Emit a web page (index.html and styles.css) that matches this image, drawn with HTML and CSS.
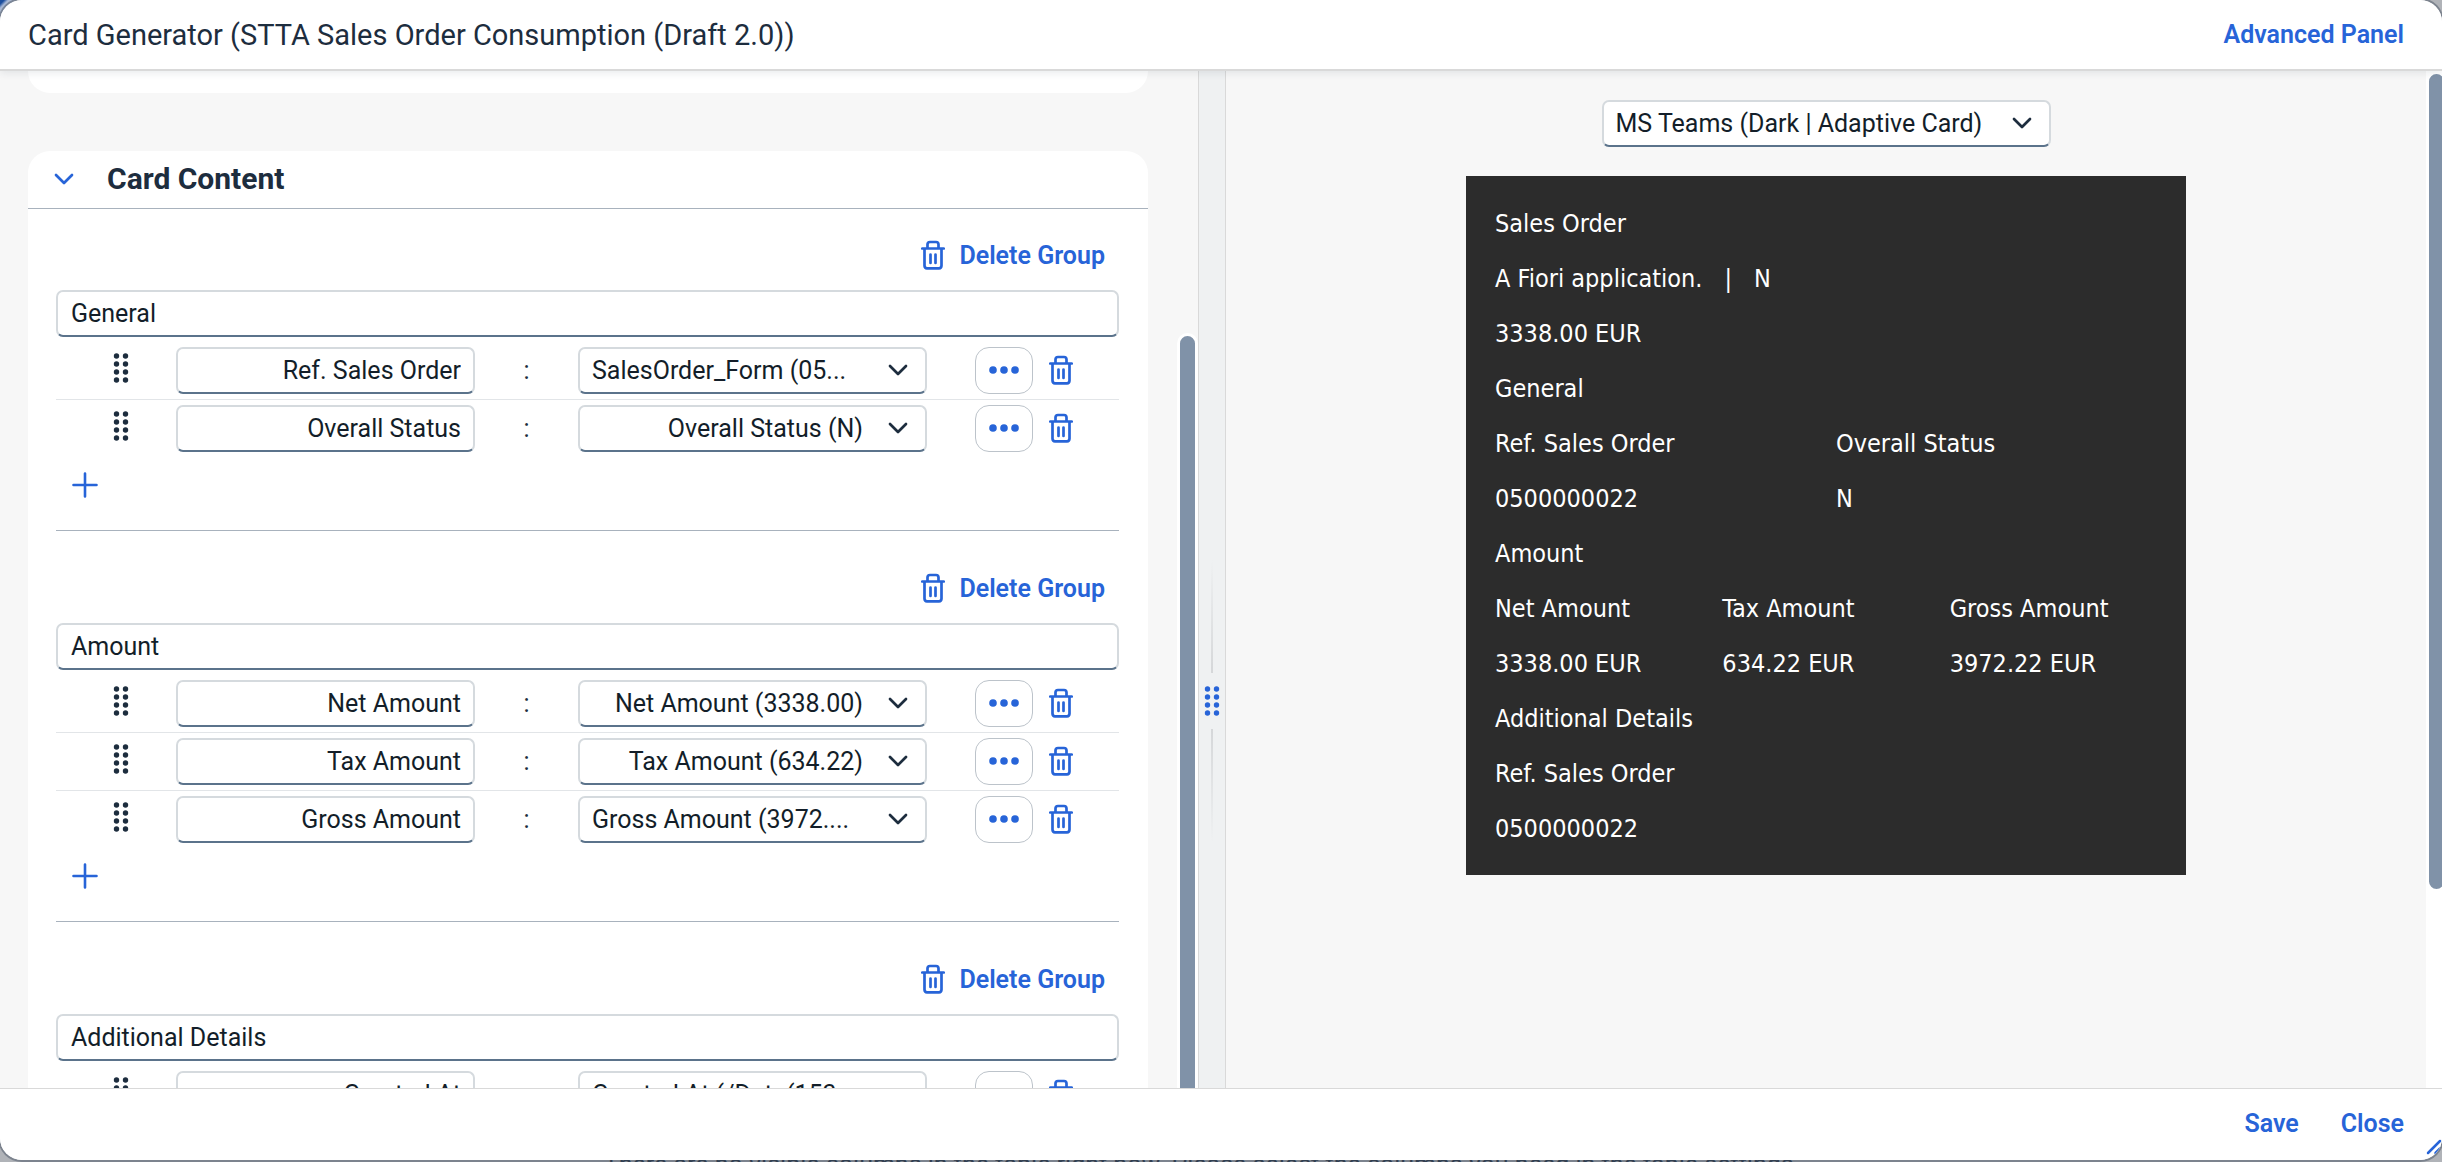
FILE: index.html
```html
<!DOCTYPE html>
<html lang="en">
<head>
<meta charset="utf-8">
<title>Card Generator</title>
<link rel="stylesheet" href="styles.css">
</head>
<body>
<svg class="sprite" aria-hidden="true">
  <symbol id="trash" viewBox="0 0 24 30">
    <path d="M1.300 8.500H22.700M6.500 8V4.500Q6.500 2 9 2H15Q17.500 2 17.500 4.500V8M3.500 9V25.500Q3.500 28.300 6 28.300H18Q20.500 28.300 20.500 25.500V9M9.500 14.500V23M14.500 14.500V23" fill="none" stroke="currentColor" stroke-width="2.700" stroke-linecap="round"/>
  </symbol>
  <symbol id="chevron" viewBox="0 0 20 12">
    <path d="M2 2L10 10L18 2" fill="none" stroke="currentColor" stroke-width="2.700" stroke-linecap="round" stroke-linejoin="round"/>
  </symbol>
  <symbol id="plus" viewBox="0 0 26 26">
    <path d="M13 1.500V24.500M1.500 13H24.500" fill="none" stroke="currentColor" stroke-width="2.600" stroke-linecap="round"/>
  </symbol>
  <symbol id="dots" viewBox="0 0 30 8">
    <circle cx="4" cy="4" r="3.800"/><circle cx="15" cy="4" r="3.800"/><circle cx="26" cy="4" r="3.800"/>
  </symbol>
  <symbol id="grip" viewBox="0 0 16 30">
    <circle cx="3.500" cy="3" r="2.700"/><circle cx="12.500" cy="3" r="2.700"/>
    <circle cx="3.500" cy="11" r="2.700"/><circle cx="12.500" cy="11" r="2.700"/>
    <circle cx="3.500" cy="19" r="2.700"/><circle cx="12.500" cy="19" r="2.700"/>
    <circle cx="3.500" cy="27" r="2.700"/><circle cx="12.500" cy="27" r="2.700"/>
  </symbol>
</svg>
<p class="backdrop-text">There are no visible columns in the table right now. Please select the columns you need in the table settings.</p>
<div class="dialog" role="dialog" aria-labelledby="dialog-title">
  <header class="dialog-header">
    <h1 id="dialog-title">Card Generator (STTA Sales Order Consumption (Draft 2.0))</h1>
    <button class="text-button" type="button">Advanced Panel</button>
  </header>
  <main class="workspace">
    <section class="pane pane-editor" aria-label="Card editor">
      <div class="editor-content">
        <div class="panel panel-previous"></div>
        <div class="panel">
          <div class="panel-header">
            <button class="icon-button expander" type="button" aria-label="Collapse"><svg class="chevron"><use href="#chevron"/></svg></button>
            <h2>Card Content</h2>
          </div>
          <div class="panel-body">
            <section class="group">
              <button class="text-button delete-group" type="button"><svg class="trash"><use href="#trash"/></svg>Delete Group</button>
              <input class="field" type="text" aria-label="Group name" value="General">
              <ul class="items">
                <li class="item">
                  <svg class="grip"><use href="#grip"/></svg>
                  <input class="field item-label" type="text" aria-label="Label" value="Ref. Sales Order">
                  <span class="colon">:</span>
                  <span class="picker picker-long"><select class="field" aria-label="Value"><option>SalesOrder_Form (05...</option></select><svg class="chevron"><use href="#chevron"/></svg></span>
                  <button class="more-button" type="button" aria-label="More"><svg class="dots"><use href="#dots"/></svg></button>
                  <button class="icon-button" type="button" aria-label="Delete"><svg class="trash"><use href="#trash"/></svg></button>
                </li>
                <li class="item">
                  <svg class="grip"><use href="#grip"/></svg>
                  <input class="field item-label" type="text" aria-label="Label" value="Overall Status">
                  <span class="colon">:</span>
                  <span class="picker"><select class="field" aria-label="Value"><option>Overall Status (N)</option></select><svg class="chevron"><use href="#chevron"/></svg></span>
                  <button class="more-button" type="button" aria-label="More"><svg class="dots"><use href="#dots"/></svg></button>
                  <button class="icon-button" type="button" aria-label="Delete"><svg class="trash"><use href="#trash"/></svg></button>
                </li>
              </ul>
              <button class="icon-button add-button" type="button" aria-label="Add"><svg class="plus"><use href="#plus"/></svg></button>
            </section>
            <section class="group">
              <button class="text-button delete-group" type="button"><svg class="trash"><use href="#trash"/></svg>Delete Group</button>
              <input class="field" type="text" aria-label="Group name" value="Amount">
              <ul class="items">
                <li class="item">
                  <svg class="grip"><use href="#grip"/></svg>
                  <input class="field item-label" type="text" aria-label="Label" value="Net Amount">
                  <span class="colon">:</span>
                  <span class="picker"><select class="field" aria-label="Value"><option>Net Amount (3338.00)</option></select><svg class="chevron"><use href="#chevron"/></svg></span>
                  <button class="more-button" type="button" aria-label="More"><svg class="dots"><use href="#dots"/></svg></button>
                  <button class="icon-button" type="button" aria-label="Delete"><svg class="trash"><use href="#trash"/></svg></button>
                </li>
                <li class="item">
                  <svg class="grip"><use href="#grip"/></svg>
                  <input class="field item-label" type="text" aria-label="Label" value="Tax Amount">
                  <span class="colon">:</span>
                  <span class="picker"><select class="field" aria-label="Value"><option>Tax Amount (634.22)</option></select><svg class="chevron"><use href="#chevron"/></svg></span>
                  <button class="more-button" type="button" aria-label="More"><svg class="dots"><use href="#dots"/></svg></button>
                  <button class="icon-button" type="button" aria-label="Delete"><svg class="trash"><use href="#trash"/></svg></button>
                </li>
                <li class="item">
                  <svg class="grip"><use href="#grip"/></svg>
                  <input class="field item-label" type="text" aria-label="Label" value="Gross Amount">
                  <span class="colon">:</span>
                  <span class="picker picker-long"><select class="field" aria-label="Value"><option>Gross Amount (3972....</option></select><svg class="chevron"><use href="#chevron"/></svg></span>
                  <button class="more-button" type="button" aria-label="More"><svg class="dots"><use href="#dots"/></svg></button>
                  <button class="icon-button" type="button" aria-label="Delete"><svg class="trash"><use href="#trash"/></svg></button>
                </li>
              </ul>
              <button class="icon-button add-button" type="button" aria-label="Add"><svg class="plus"><use href="#plus"/></svg></button>
            </section>
            <section class="group">
              <button class="text-button delete-group" type="button"><svg class="trash"><use href="#trash"/></svg>Delete Group</button>
              <input class="field" type="text" aria-label="Group name" value="Additional Details">
              <ul class="items">
                <li class="item">
                  <svg class="grip"><use href="#grip"/></svg>
                  <input class="field item-label" type="text" aria-label="Label" value="Created At">
                  <span class="colon">:</span>
                  <span class="picker picker-long"><select class="field" aria-label="Value"><option>Created At (/Date(153...</option></select><svg class="chevron"><use href="#chevron"/></svg></span>
                  <button class="more-button" type="button" aria-label="More"><svg class="dots"><use href="#dots"/></svg></button>
                  <button class="icon-button" type="button" aria-label="Delete"><svg class="trash"><use href="#trash"/></svg></button>
                </li>
              </ul>
            </section>
          </div>
        </div>
      </div>
      <div class="scroll-track scroll-editor"><div class="scroll-thumb"></div></div>
    </section>
    <div class="splitter" role="separator" aria-orientation="vertical">
      <span class="splitter-line splitter-line-top"></span>
      <svg class="grip"><use href="#grip"/></svg>
      <span class="splitter-line splitter-line-bottom"></span>
    </div>
    <section class="pane pane-preview" aria-label="Preview">
      <div class="preview-content">
        <span class="picker host-picker"><select class="field" aria-label="Preview host"><option>MS Teams (Dark | Adaptive Card)</option></select><svg class="chevron"><use href="#chevron"/></svg></span>
        <article class="card">
          <p>Sales Order</p>
          <p class="card-subtitle"><span>A Fiori application.</span><span>|</span><span>N</span></p>
          <p>3338.00 EUR</p>
          <p>General</p>
          <div class="columns columns-two"><span>Ref. Sales Order</span><span>Overall Status</span></div>
          <div class="columns columns-two"><span>0500000022</span><span>N</span></div>
          <p>Amount</p>
          <div class="columns columns-three"><span>Net Amount</span><span>Tax Amount</span><span>Gross Amount</span></div>
          <div class="columns columns-three"><span>3338.00 EUR</span><span>634.22 EUR</span><span>3972.22 EUR</span></div>
          <p>Additional Details</p>
          <p>Ref. Sales Order</p>
          <p>0500000022</p>
        </article>
      </div>
      <div class="scroll-track scroll-preview"><div class="scroll-thumb"></div></div>
    </section>
  </main>
  <footer class="dialog-footer">
    <button class="text-button" type="button">Save</button>
    <button class="text-button" type="button">Close</button>
    <svg class="resize-handle" viewBox="0 0 16 16" aria-hidden="true"><path d="M2 14L14 2M9.500 14L14 9.500" fill="none" stroke="currentColor" stroke-width="2.500" stroke-linecap="round"/></svg>
  </footer>
</div>
</body>
</html>
```
FILE: styles.css
```css
* { box-sizing: border-box; }

:root {
  --blue: #2764d8;
  --ink: #1d2d3e;
  --field-ink: #131e29;
  --steel: #8092a8;
  --surface: #f7f7f7;
}

body {
  margin: 0;
  height: 100vh;
  overflow: hidden;
  position: relative;
  display: flex;
  flex-direction: column;
  background: linear-gradient(135deg, #1d4f9e 0, #1d4f9e 3px, #a9b9d6 6px, #b0b3b8 14px);
  color: var(--ink);
  font: 25px/32px Roboto, "Liberation Sans", sans-serif;
}

h1, h2, p, ul { margin: 0; padding: 0; }
button { font: inherit; background: none; border: 0; padding: 0; cursor: pointer; }
svg { display: block; flex: none; }
.sprite { position: absolute; width: 0; height: 0; }

.backdrop-text {
  position: absolute;
  left: 0;
  right: 38px;
  bottom: -19px;
  text-align: center;
  white-space: nowrap;
}

.dialog {
  position: relative;
  flex: 1;
  min-height: 0;
  margin-bottom: 2px;
  display: flex;
  flex-direction: column;
  background: #fff;
  border-radius: 22px;
  overflow: hidden;
  box-shadow: 0 0 0 2px rgba(72, 84, 100, 0.5);
}

.dialog-header {
  position: relative;
  z-index: 1;
  display: flex;
  align-items: center;
  justify-content: space-between;
  height: 71px;
  padding: 0 38px 0 28px;
  border-bottom: 2px solid #d9d9d9;
  background: #fff;
  box-shadow: 0 2px 8px rgba(34, 53, 72, 0.1);
}

h1 { font-size: 29px; line-height: 36px; font-weight: 400; }
h2 { font-size: 30px; line-height: 36px; font-weight: 700; }
.text-button { color: var(--blue); font-weight: 600; height: 47px; }
.icon-button {
  display: flex;
  align-items: center;
  justify-content: center;
  height: 47px;
  padding-bottom: 2px;
  color: var(--blue);
}

.workspace {
  flex: 1;
  min-height: 0;
  display: grid;
  grid-template-columns: minmax(0, 1198fr) 28px minmax(0, 1216fr);
  grid-template-rows: minmax(0, 1fr);
  background: var(--surface);
}
.pane { display: flex; min-height: 0; overflow: hidden; }

.editor-content { flex: 1; padding: 0 29px 0 28px; }
.panel { background: #fff; border-radius: 22px; }
.panel-previous { height: 22px; border-radius: 0 0 22px 22px; margin-bottom: 58px; }
.panel-header {
  display: flex;
  align-items: center;
  gap: 33px;
  height: 58px;
  padding: 0 26px 2px;
  border-bottom: 1px solid #a8b2bd;
}
.expander { padding-bottom: 0; }
.panel-body { padding: 0 29px 0 28px; }

.group {
  display: flex;
  flex-direction: column;
  padding: 34px 0 21px;
  border-bottom: 1px solid #a8b2bd;
}
.group:first-child { padding-top: 23px; }
.delete-group {
  align-self: flex-end;
  display: flex;
  align-items: center;
  gap: 14px;
  margin: 0 14px 11px 0;
}
.delete-group .trash { margin-bottom: 2px; }

.field {
  width: 100%;
  height: 47px;
  padding: 0 13px;
  border: 2px solid #d5dade;
  border-bottom-color: #5b738b;
  border-radius: 7px;
  background: #fff;
  color: var(--field-ink);
  font: inherit;
}
.items { list-style: none; margin: 5px 0; }
.item {
  display: grid;
  grid-template-columns: 120px 299px 103px 349px 48px 58px 56px;
  align-items: center;
  padding: 5px 0;
}
.item + .item { border-top: 1px solid #e2e5e8; }
.item .grip { justify-self: center; margin: 0 0 6px 9px; }
.item-label { text-align: right; padding: 0 12px; }
.colon { text-align: center; }
.more-button {
  grid-column: 6;
  display: flex;
  align-items: center;
  justify-content: center;
  height: 47px;
  padding-bottom: 2px;
  border: 1px solid #bcc3ca;
  border-radius: 14px;
  color: var(--blue);
}

.picker { display: grid; align-items: center; }
.picker > * { grid-area: 1 / 1; }
.picker .field {
  appearance: none;
  padding: 0 62px 0 12px;
  text-align-last: right;
  text-overflow: ellipsis;
  white-space: nowrap;
  overflow: hidden;
}
.picker-long .field,
.host-picker .field { text-align-last: left; }
.picker .chevron { justify-self: end; margin: 0 19px 2px 0; pointer-events: none; }

.add-button { width: 58px; }

.chevron { width: 20px; height: 12px; }
.trash { width: 24px; height: 30px; }
.plus { width: 26px; height: 26px; }
.dots { width: 30px; height: 8px; fill: currentColor; }
.grip { width: 16px; height: 30px; fill: currentColor; }

.scroll-track { flex: none; display: flex; flex-direction: column; overflow: hidden; }
.scroll-thumb {
  flex: none;
  width: 21px;
  border: 3px solid #fff;
  border-radius: 11px;
  background: var(--steel);
}
.scroll-editor { width: 21px; padding-top: 262px; }
.scroll-editor .scroll-thumb { height: 120%; }
.scroll-preview { width: 16px; background: #fff; }
.scroll-preview .scroll-thumb { height: 80.7%; }

.splitter {
  display: flex;
  flex-direction: column;
  align-items: center;
  justify-content: center;
  gap: 13px;
  padding-top: 242px;
  border: solid #d9d9d9;
  border-width: 0 1px;
  background: #eff1f2;
  color: var(--blue);
}
.splitter-line { width: 2px; height: 113px; }
.splitter-line-top { background: linear-gradient(transparent, #d5d7d9); }
.splitter-line-bottom { background: linear-gradient(#d5d7d9, transparent); }

.preview-content {
  flex: 1;
  display: flex;
  flex-direction: column;
  align-items: center;
  gap: 29px;
  padding-top: 29px;
}
.host-picker { width: 449px; }

.card {
  width: 720px;
  display: flex;
  flex-direction: column;
  gap: 22px;
  padding: 31px 9px 30px 29px;
  background: #2c2c2c;
  color: #fff;
  font: 25px/33px "DejaVu Sans Condensed", "Noto Sans", sans-serif;
}
.card-subtitle { display: flex; gap: 22px; }
.columns { display: grid; }
.columns-two { grid-template-columns: repeat(2, 1fr); }
.columns-three { grid-template-columns: repeat(3, 1fr); }

.dialog-footer {
  position: relative;
  display: flex;
  align-items: center;
  justify-content: flex-end;
  gap: 42px;
  height: 72px;
  padding: 0 38px 2px 0;
  border-top: 1px solid #d9d9d9;
  background: #fff;
}
.resize-handle {
  position: absolute;
  right: 0;
  bottom: 5px;
  width: 16px;
  height: 16px;
  color: var(--blue);
}
```
